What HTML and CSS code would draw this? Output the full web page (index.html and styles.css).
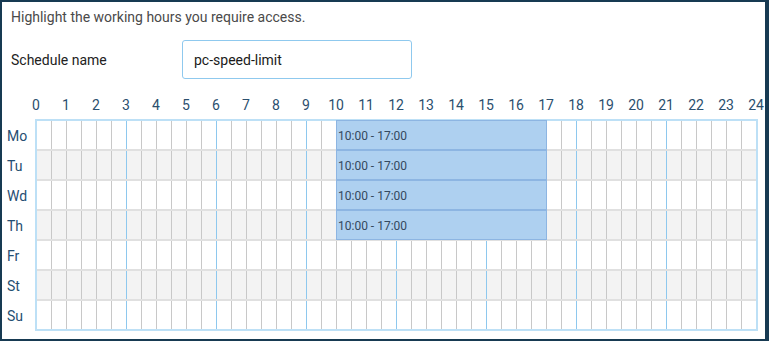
FILE: index.html
```html
<!DOCTYPE html>
<html lang="en">
<head>
<meta charset="utf-8">
<title>Schedule</title>
<link rel="stylesheet" href="styles.css">
</head>
<body>
<div class="panel">
  <p class="intro">Highlight the working hours you require access.</p>
  <div class="name-row">
    <label class="name-label" for="sched">Schedule name</label>
    <input class="name-input" id="sched" type="text" value="pc-speed-limit">
  </div>
  <div class="hours">
    <span>0</span><span>1</span><span>2</span><span>3</span><span>4</span><span>5</span><span>6</span><span>7</span><span>8</span><span>9</span><span>10</span><span>11</span><span>12</span><span>13</span><span>14</span><span>15</span><span>16</span><span>17</span><span>18</span><span>19</span><span>20</span><span>21</span><span>22</span><span>23</span><span>24</span>
  </div>
  <div class="week">
    <div class="days">
      <div class="day">Mo</div>
      <div class="day">Tu</div>
      <div class="day">Wd</div>
      <div class="day">Th</div>
      <div class="day">Fr</div>
      <div class="day">St</div>
      <div class="day">Su</div>
    </div>
    <div class="grid">
      <div class="row"><div class="slot">10:00 - 17:00</div></div>
      <div class="row alt"><div class="slot">10:00 - 17:00</div></div>
      <div class="row"><div class="slot">10:00 - 17:00</div></div>
      <div class="row alt"><div class="slot">10:00 - 17:00</div></div>
      <div class="row"></div>
      <div class="row alt"></div>
      <div class="row last"></div>
    </div>
  </div>
</div>
</body>
</html>
```

FILE: styles.css
```css
html, body {
  margin: 0;
  height: 341px;
  overflow: hidden;
}
body {
  background: #173a52;
  padding: 2px 4px 2px 2px;
  box-sizing: border-box;
  font-family: Roboto, "Liberation Sans", sans-serif;
  font-size: 14px;
}
.panel {
  background: #ffffff;
  height: 337px;
  box-sizing: border-box;
  padding: 7px 0 0 9px;
  overflow: hidden;
}
.intro {
  margin: 0;
  line-height: 16px;
  color: #4a4a4a;
}
.name-row {
  display: flex;
  align-items: center;
  margin-top: 15px;
}
.name-label {
  width: 171px;
  color: #222222;
  line-height: 16px;
}
.name-input {
  width: 230px;
  height: 39px;
  box-sizing: border-box;
  border: 1px solid #8fc9ee;
  border-radius: 3px;
  padding: 0 11px;
  font-family: Roboto, "Liberation Sans", sans-serif;
  font-size: 14px;
  color: #1a1a1a;
  outline: none;
}
.hours {
  display: flex;
  margin: 18px 0 0 10px;
  line-height: 16px;
  color: #2b4f6e;
}
.hours span {
  flex: 0 0 30px;
  text-align: center;
}
.week {
  display: flex;
  margin: 6px 0 0 -4px;
}
.days {
  width: 28px;
  padding-top: 2px;
  color: #254e72;
}
.day {
  height: 30px;
  line-height: 30px;
}
.grid {
  border: 2px solid #bde0f6;
  width: 719px;
}
.row {
  display: grid;
  grid-template-columns: repeat(47, 15px) 14px;
  height: 28px;
  border-bottom: 2px solid #e0e0e0;
  background-color: #ffffff;
  background-image:
    linear-gradient(to right, transparent 89px, #8ec8ee 89px),
    linear-gradient(to right, transparent 14px, #c8c8c8 14px);
  background-size: 90px 100%, 15px 100%;
}
.row.alt {
  background-color: #f3f3f3;
}
.row.last {
  border-bottom: 0;
}
.slot {
  grid-column: 21 / 35;
  grid-row: 1;
  margin: -1px 0 -1px -1px;
  border: 1px solid #8db5e2;
  background: #aed0f0;
  display: flex;
  align-items: center;
  padding: 2px 0 0 1px;
  font-size: 12px;
  color: #34495e;
  white-space: nowrap;
}
```
